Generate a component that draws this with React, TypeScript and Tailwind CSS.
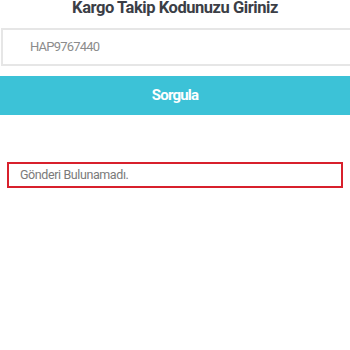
export default function App() {
  return (
    <div className="w-[350px] h-[350px] bg-white overflow-hidden" style={{ fontFamily: 'Roboto, "Liberation Sans", sans-serif' }}>
      <h1 className="text-[16.5px] leading-[16px] font-bold tracking-[-0.45px] text-[#3b3e46] text-center">Kargo Takip Kodunuzu Giriniz</h1>

      <div className="mt-3 ml-px h-[38px] border-2 border-r-0 border-[#e6e6e6] flex items-center pl-[27px]">
        <span className="text-[13px] tracking-[-0.8px] text-[#8c8c8c]">HAP9767440</span>
      </div>

      <button className="mt-[10px] w-full h-[39px] bg-[#3cc2d7] text-white font-bold text-[15px] tracking-[-0.8px] flex items-center justify-center">
        Sorgula
      </button>

      <div className="mt-[47px] mx-[7px] h-[26px] border-2 border-[#d8202c] flex items-center pl-[11px]">
        <span className="text-[12.5px] tracking-[-0.4px] text-[#7a7a7a]">Gönderi Bulunamadı.</span>
      </div>
    </div>
  );
}
